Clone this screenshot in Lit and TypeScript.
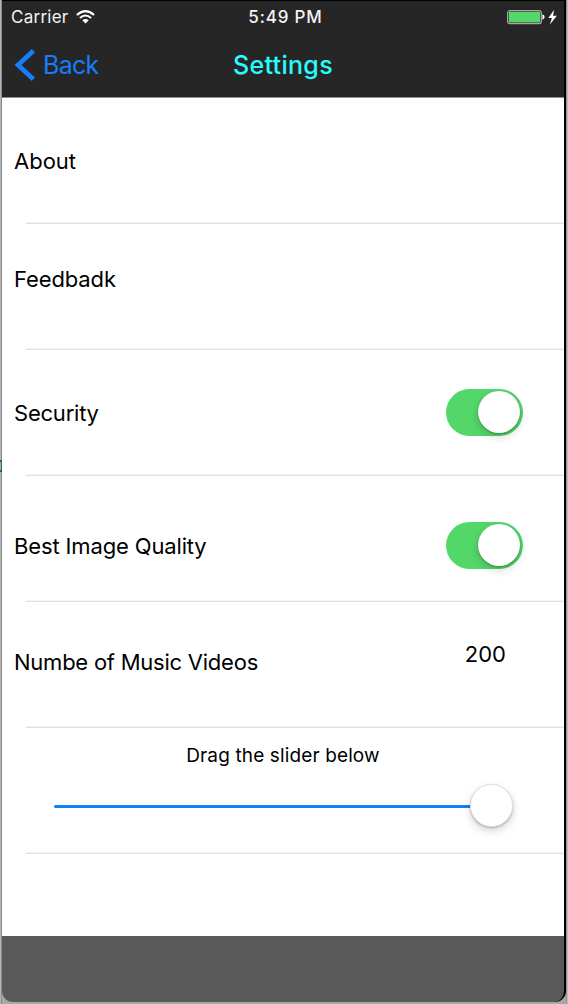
import { LitElement, html, css, svg } from "lit";
import { customElement, state, property } from "lit/decorators.js";

@customElement("ios-switch")
class IosSwitch extends LitElement {
  @property({ type: Boolean, reflect: true }) on = false;

  static styles = css`
    :host {
      display: flex;
      box-sizing: border-box;
      width: 76.5px;
      height: 46.7px;
      padding: 2.3px;
      border-radius: 24px;
      background: #e5e5e5;
    }
    :host([on]) {
      justify-content: flex-end;
      background: #53d769;
    }
    .knob {
      width: 42px;
      height: 42px;
      border-radius: 50%;
      background: #fff;
      box-shadow: 0 4px 10px rgba(0, 0, 0, 0.16), 0 1px 2px rgba(0, 0, 0, 0.28);
    }
  `;

  render() {
    return html`<div class="knob" @click=${() => (this.on = !this.on)}></div>`;
  }
}

@customElement("app-root")
class AppRoot extends LitElement {
  @state() private count = 200;

  static styles = css`
    :host {
      display: block;
      font-family: Inter, "Liberation Sans", sans-serif;
      color: #000;
    }
    * {
      box-sizing: border-box;
    }
    .window {
      position: relative;
      height: 1004px;
      overflow: hidden;
      padding: 0 2px 2px;
      background: linear-gradient(90deg, #b4b4b4 0 1px, #8b8b8b 1px 2px, #a8a8a8 2px 566px, #959595 566px 567px, #bcbcbc 567px);
    }
    .marker {
      position: absolute;
      left: -2px;
      top: 460px;
      width: 4px;
      height: 12px;
      border: 2px solid #256378;
      border-right-width: 1px;
      background: #b3aaa0;
    }
    .device {
      height: 1002px;
      display: flex;
      flex-direction: column;
      border-right: 2px solid #000;
      border-radius: 0 0 11px 11px;
      background: #595959;
      overflow: hidden;
    }
    .top {
      height: 98px;
      border-top: 1px solid #000;
      border-bottom: 1px solid #8e8e8e;
      background: #262626;
    }
    .status {
      display: grid;
      grid-template-columns: 1fr auto 1fr;
      align-items: center;
      height: 32px;
      padding: 0 7px 0 9px;
      color: #f4f4f4;
      font-size: 17px;
      line-height: 32px;
    }
    .carrier {
      display: flex;
      align-items: center;
      gap: 8px;
      letter-spacing: 0.25px;
    }
    .clock {
      font-weight: 500;
      letter-spacing: 0.85px;
      padding-left: 3px;
    }
    .power {
      display: flex;
      justify-content: flex-end;
      align-items: center;
    }
    svg {
      display: block;
    }
    .nav {
      display: grid;
      grid-template-columns: 1fr auto 1fr;
      align-items: center;
      height: 64px;
      padding-left: 12px;
      font-size: 25px;
      line-height: 64px;
    }
    .back {
      display: flex;
      align-items: center;
      gap: 8px;
      color: #147efb;
      letter-spacing: -0.7px;
    }
    .title {
      color: #28fdfd;
      font-weight: 500;
      letter-spacing: 0.3px;
      padding-right: 12px;
    }
    .list {
      height: 838px;
      background: #fff;
    }
    .row {
      display: flex;
      justify-content: space-between;
      align-items: flex-start;
      height: 126px;
      padding: 0 41.5px 0 12px;
      background: linear-gradient(#f5f5f5 1px, #e0e0e2 1px) 24px 100% / 100% 2px no-repeat;
      font-size: 22px;
      line-height: 26px;
    }
    .about { padding-top: 50px; }
    .feedback { padding-top: 42px; letter-spacing: -0.12px; }
    .security { padding-top: 50px; letter-spacing: -0.22px; }
    .quality { padding-top: 57px; letter-spacing: -0.14px; }
    .number { padding-top: 47px; padding-right: 58px; }
    .number span:first-child { letter-spacing: -0.24px; }
    .security ios-switch { margin-top: -11px; }
    .quality ios-switch { margin-top: -11px; }
    .value { margin-top: -8px; }
    .slider {
      flex-direction: column;
      align-items: stretch;
      justify-content: flex-start;
      gap: 15px;
      padding: 15px 51px 0 52px;
    }
    .hint {
      font-size: 19px;
      text-align: center;
      letter-spacing: 0.13px;
      padding-right: 1px;
    }
    .track {
      display: flex;
      align-items: center;
      height: 43px;
    }
    .fill {
      flex: 1;
      height: 3px;
      margin: 2px -3px 0 0;
      border-radius: 2px;
      background: #147efb;
    }
    .thumb {
      width: 43px;
      height: 43px;
      border-radius: 50%;
      background: #fff;
      border: 0.5px solid #e2e2e2;
      box-shadow: 0 4px 10px rgba(0, 0, 0, 0.16), 0 1px 2px rgba(0, 0, 0, 0.25);
    }
  `;

  private wifi = svg`<svg width="19" height="14" viewBox="0 0 19 14">
    <g fill="none" stroke="#fff" stroke-width="2">
      <path d="M0.9 4.9Q9.5 -2.7 18.1 4.9" />
      <path d="M3.9 8Q9.5 3 15.1 8" />
    </g>
    <path d="M6.3 10.3Q9.5 7.6 12.7 10.3L9.5 13.4Z" fill="#fff" />
  </svg>`;

  private battery = svg`<svg width="50" height="16" viewBox="0 0 50 16">
    <rect x="0.6" y="1.6" width="33.8" height="13" rx="2.4" fill="#262626" stroke="#a6a6a6" stroke-width="1.2" />
    <rect x="1.8" y="2.8" width="31.4" height="10.6" rx="0.8" fill="#53d769" />
    <path d="M35.4 5.2Q37.6 5.7 37.6 8T35.4 10.8Z" fill="#fff" />
    <path d="M47.2 0.8L41.3 9H44.9L42.9 15.4L49.9 6.8H46Z" fill="#fff" />
  </svg>`;

  render() {
    return html`
      <div class="window">
        <div class="device">
          <header class="top">
            <div class="status">
              <span class="carrier">Carrier ${this.wifi}</span>
              <span class="clock">5:49 PM</span>
              <span class="power">${this.battery}</span>
            </div>
            <nav class="nav">
              <span class="back">
                <svg width="21" height="32" viewBox="0 0 21 32">
                  <path d="M19.4 1.8L4 16L19.4 30.2" fill="none" stroke="#147efb" stroke-width="4.7" />
                </svg>
                Back
              </span>
              <span class="title">Settings</span>
              <span></span>
            </nav>
          </header>
          <main class="list">
            <div class="row about"><span>About</span></div>
            <div class="row feedback"><span>Feedbadk</span></div>
            <div class="row security"><span>Security</span><ios-switch on></ios-switch></div>
            <div class="row quality"><span>Best Image Quality</span><ios-switch on></ios-switch></div>
            <div class="row number"><span>Numbe of Music Videos</span><span class="value">${this.count}</span></div>
            <div class="row slider">
              <div class="hint">Drag the slider below</div>
              <div class="track"><div class="fill"></div><div class="thumb"></div></div>
            </div>
          </main>
        </div>
        <div class="marker"></div>
      </div>
    `;
  }
}
